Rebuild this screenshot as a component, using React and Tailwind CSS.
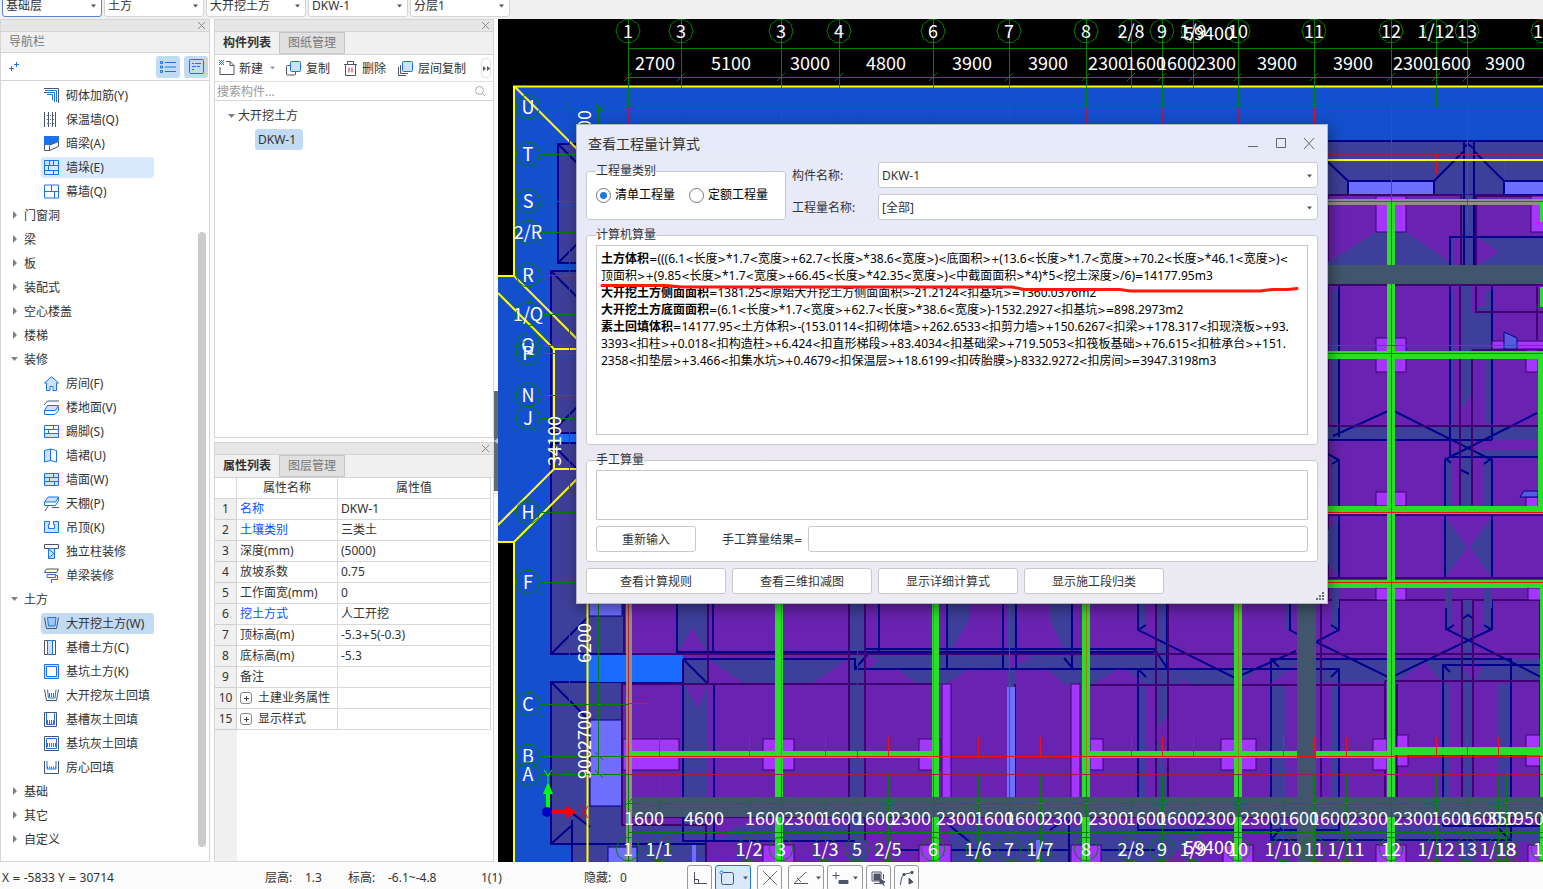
import React, { useState } from 'react';

const BLUE = '#1a73e8';
const DARK = '#4d5468';
const PALE = '#cfe1fa';

const icons = {
  rebar: (
    <g fill="none">
      <path d="M0 .5h14.500V15M0 4.500h10.500V11" stroke={DARK} />
      <path d="M1 2.500h11.500V14M3 6.500h5.500V12M5 4.500h5.500V14" stroke={BLUE} />
    </g>
  ),
  insulation: (
    <g fill="none">
      <path d="M.5 0v15M4.500 0v15M8.500 0v15M11.500 0v15" stroke={DARK} />
      <path d="M0 3.500h12M0 7.500h12M0 11.500h12" stroke={BLUE} strokeDasharray="1 2" />
    </g>
  ),
  hiddenBeam: (
    <g>
      <path d="M0 0h15v5L6 9H0z" fill={BLUE} />
      <path d="M.5 9v5.500h5V9.500M5.500 14.500l9-4V5.500L6 9" fill="none" stroke={DARK} />
    </g>
  ),
  pier: (
    <g fill="none" stroke={BLUE}>
      <path d="M1 1h9v4H1z" fill={PALE} stroke="none" />
      <path d="M.5 .5h14v14H.500zM.5 5.500h14M.5 10.500h14M5.500.5v5M9.500.5v5M4.500 5.500v5M9.500 10.500v4" />
    </g>
  ),
  curtain: (
    <path d="M.5 1h14v13H.500zM.5 7.500h14M7.500 1v6.500M10.500 7.500V14" fill="none" stroke={BLUE} />
  ),
  room: (
    <path
      d="M2.500 7v7.500h3.500v-4h3v4h3.500V7H14.500L7.500.7.500 7z"
      fill={PALE}
      stroke={BLUE}
    />
  ),
  floor: (
    <g>
      <path d="M3.500 5.500h11l-3 5H.500z" fill={PALE} stroke={BLUE} />
      <path d="M.5 10.500v4h10.500l3.500-4v-4" fill="none" stroke={BLUE} />
      <path d="M0 5l3.500-4H15" fill="none" stroke={DARK} />
    </g>
  ),
  skirting: (
    <g stroke={BLUE}>
      <path d="M.5 1.500h14v12H.500z" fill="#fff" />
      <path d="M.5 9.500h14v4H.500z" fill={PALE} />
      <path d="M.5 5.500h14M9.500 1.500v4M4.500 5.500v4" />
    </g>
  ),
  dado: (
    <g stroke={BLUE}>
      <path d="M.5 2.500L6.500 1v11.500L.500 14z" fill={PALE} />
      <path d="M6.500 1l6 1.500V14l-6-1.500z" fill="#fff" />
    </g>
  ),
  wallFace: (
    <g stroke={BLUE} fill={PALE}>
      <path d="M.5 1.500h14v12H.500z" />
      <path d="M.5 5.500h14M.5 9.500h14M9.500 1.500v4M5.500 5.500v4M10.500 9.500v4" />
    </g>
  ),
  ceiling: (
    <g fill="none">
      <path d="M4 1h10.500l-3 5H.500z" fill={PALE} stroke={BLUE} />
      <path d="M.5 6v3.500h11l3-5V1" stroke={BLUE} />
      <path d="M4.500 9.500L1 15M8 11.500h7" stroke={DARK} />
    </g>
  ),
  suspended: (
    <path
      d="M.5 1.500h5v3h-1v4h6v-4h-1v-3h5v11H.500z"
      fill={PALE}
      stroke={BLUE}
    />
  ),
  column: (
    <g fill="none">
      <path d="M.5.5h14v4H.500z" stroke={DARK} />
      <path d="M4.500 4.500h6v10h-6zM5 5.500l5 4-5 4" fill={PALE} stroke={BLUE} />
    </g>
  ),
  beamFinish: (
    <g fill="none">
      <path d="M2.500 1h12l-2 3.500H.500z" stroke={DARK} />
      <path d="M3 6.500h8.500v3H3zM11.500 7.500h2v4h-6V15" stroke={BLUE} />
    </g>
  ),
  pit: (
    <g fill="none">
      <path d="M3.500 1.500h8.500l-1 8.500H4.500z" fill="#9fc8f7" stroke={BLUE} />
      <path d="M.5 1.500l2 11h10l2-11" stroke={DARK} />
    </g>
  ),
  trench: (
    <g>
      <path d="M.5.5h11v14H.500z" fill="#fff" stroke={DARK} />
      <path d="M3.500.5h5v14h-5z" fill={PALE} stroke={BLUE} />
    </g>
  ),
  hole: (
    <g stroke={BLUE}>
      <path d="M.5.5h14v14H.500z" fill={PALE} />
      <path d="M2.500 2.500h10v10h-10z" fill="#fff" />
    </g>
  ),
  pitFill: (
    <g fill="none">
      <path d="M3.500 1.500l1 8.500h6.500l1-8.500" stroke={BLUE} />
      <path d="M5 6h6M5 8h6" stroke={BLUE} strokeDasharray="1 1" strokeWidth="2" />
      <path d="M.5 1.500l2 11h10l2-11" stroke={DARK} />
    </g>
  ),
  trenchFill: (
    <g fill="none">
      <path d="M.5.5h12v14H.500z" stroke={DARK} />
      <path d="M2.500.5v12h8V.5" stroke={BLUE} />
      <path d="M3 11h7M3 9h7" stroke={BLUE} strokeDasharray="1 1" strokeWidth="2" />
    </g>
  ),
  holeFill: (
    <g fill="none">
      <path d="M.5.5h14v14H.500z" stroke={DARK} />
      <path d="M2.500 2.500h10v10h-10z" stroke={BLUE} />
      <path d="M3 10h9M3 8h9" stroke={BLUE} strokeDasharray="1 1" strokeWidth="2" />
    </g>
  ),
  roomFill: (
    <g fill="none">
      <path d="M.5 1v12.500h14V1" stroke={DARK} />
      <path d="M3 1v8h9V1" stroke={BLUE} />
      <path d="M3 7.500h9" stroke={BLUE} strokeDasharray="1 1" strokeWidth="2" />
    </g>
  ),
};

const navItems = [
  { icon: 'rebar', label: '砌体加筋(Y)' },
  { icon: 'insulation', label: '保温墙(Q)' },
  { icon: 'hiddenBeam', label: '暗梁(A)' },
  { icon: 'pier', label: '墙垛(E)', hover: true },
  { icon: 'curtain', label: '幕墙(Q)' },
  { group: true, label: '门窗洞' },
  { group: true, label: '梁' },
  { group: true, label: '板' },
  { group: true, label: '装配式' },
  { group: true, label: '空心楼盖' },
  { group: true, label: '楼梯' },
  { group: true, open: true, label: '装修' },
  { icon: 'room', label: '房间(F)' },
  { icon: 'floor', label: '楼地面(V)' },
  { icon: 'skirting', label: '踢脚(S)' },
  { icon: 'dado', label: '墙裙(U)' },
  { icon: 'wallFace', label: '墙面(W)' },
  { icon: 'ceiling', label: '天棚(P)' },
  { icon: 'suspended', label: '吊顶(K)' },
  { icon: 'column', label: '独立柱装修' },
  { icon: 'beamFinish', label: '单梁装修' },
  { group: true, open: true, label: '土方' },
  { icon: 'pit', label: '大开挖土方(W)', active: true },
  { icon: 'trench', label: '基槽土方(C)' },
  { icon: 'hole', label: '基坑土方(K)' },
  { icon: 'pitFill', label: '大开挖灰土回填' },
  { icon: 'trenchFill', label: '基槽灰土回填' },
  { icon: 'holeFill', label: '基坑灰土回填' },
  { icon: 'roomFill', label: '房心回填' },
  { group: true, label: '基础' },
  { group: true, label: '其它' },
  { group: true, label: '自定义' },
];

const properties = [
  { no: 1, name: '名称', value: 'DKW-1', link: true },
  { no: 2, name: '土壤类别', value: '三类土', link: true },
  { no: 3, name: '深度(mm)', value: '(5000)' },
  { no: 4, name: '放坡系数', value: '0.75' },
  { no: 5, name: '工作面宽(mm)', value: '0' },
  { no: 6, name: '挖土方式', value: '人工开挖', link: true },
  { no: 7, name: '顶标高(m)', value: '-5.3+5(-0.3)' },
  { no: 8, name: '底标高(m)', value: '-5.3' },
  { no: 9, name: '备注', value: '' },
  { no: 10, name: '土建业务属性', value: '', expand: true },
  { no: 15, name: '显示样式', value: '', expand: true },
];

// Operators are set in a wider face than the digits around them
const Formula = ({ text }) =>
  text.split(/([<>=+]+)/).map((part, i) =>
    i % 2 ? (
      <span key={i} className="font-['DejaVu_Sans',sans-serif] text-[10px] leading-none">{part}</span>
    ) : (
      part
    )
  );

const Caret = ({ className }) => (
  <svg className={className} width="5" height="4" viewBox="0 0 5 4">
    <path d="M0 .5h5L2.500 3.500z" fill="#4d5468" />
  </svg>
);

const CloseMark = () => (
  <svg width="9" height="9" viewBox="0 0 9 9">
    <path d="M1 1l7 7M8 1L1 8" stroke="#8c8c8c" />
  </svg>
);

const PanelStrip = () => (
  <div className="flex h-3 shrink-0 items-center justify-end border-b border-[#d5d5d5] bg-[#e6e6e6] pr-[3px]">
    <button type="button" aria-label="关闭">
      <CloseMark />
    </button>
  </div>
);

const Tabs = ({ active, other }) => (
  <div className="flex h-[23px] shrink-0 border-b border-[#d5d5d5] bg-[#f0f0f0]">
    <button type="button" className="w-[65px] border-r border-[#c3c5ca] bg-[#f0f0f0] font-bold">
      {active}
    </button>
    <button type="button" className="w-[65px] border-r border-b border-t border-[#c3c5ca] bg-[#e0e0e0] text-[#777]">
      {other}
    </button>
  </div>
);

const TopBar = () => {
  const combos = ['基础层', '土方', '大开挖土方', 'DKW-1', '分层1'];
  return (
    <header className="flex h-[19px] shrink-0 items-end gap-[2px] overflow-hidden bg-[#f0f0f0] pb-[2px] pl-[2px]">
      {combos.map((name, i) => (
        <div key={name} className="relative w-[100px]">
          <select
            aria-label={name}
            className={`h-6 w-full appearance-none rounded-[3px] border bg-white px-[3px] pt-px outline-none ${
              i === 0 ? 'border-[#5b84d7]' : 'border-[#d5d5d5]'
            }`}
          >
            <option>{name}</option>
          </select>
          <Caret className="pointer-events-none absolute right-[6px] top-[11px]" />
        </div>
      ))}
    </header>
  );
};

const NavRow = ({ item }) => {
  if (item.group) {
    return (
      <button type="button" className="flex h-6 w-full items-center pl-[9px]">
        <svg width="8" height="8" viewBox="0 0 8 8" className="mr-[6px]">
          <path d={item.open ? 'M1 2h7L4.500 6z' : 'M3 0v8l4-4z'} fill="#808080" />
        </svg>
        <span className="pt-[2px]">{item.label}</span>
      </button>
    );
  }

  return (
    <div className="flex h-6 items-center pl-10">
      <button
        type="button"
        className={`flex h-[21px] items-center gap-[7px] rounded-[3px] pl-[3px] ${
          item.active ? 'w-[113px] bg-[#c3daf3]' : ''
        } ${item.hover ? 'w-[113px] bg-[#d9eaff]' : ''}`}
      >
        <svg width="15" height="15" viewBox="0 0 15 15" className="shrink-0">
          {icons[item.icon]}
        </svg>
        <span className="pt-[2px]">{item.label}</span>
      </button>
    </div>
  );
};

const NavPanel = () => (
  <nav className="flex w-[210px] shrink-0 flex-col border border-[#d5d5d5] bg-white">
    <PanelStrip />
    <h2 className="flex h-[21px] shrink-0 items-center border-b border-[#d5d5d5] bg-[#f0f0f0] pl-2 text-[#777]">
      导航栏
    </h2>
    <div className="flex h-7 shrink-0 items-center border-b border-[#d5d5d5] pl-2">
      <button type="button" aria-label="添加" className="mr-auto">
        <svg width="10" height="11" viewBox="0 0 10 11">
          <path d="M2.500 5v5M0 7.500h5M7.500 1v5M5 3.500h5" stroke={BLUE} />
        </svg>
      </button>
      <button type="button" aria-label="列表" className="mr-1 flex h-[22px] w-6 items-center justify-center rounded-[3px] bg-[#c3daf3]">
        <svg width="16" height="14" viewBox="0 0 16 14" fill="none" stroke={BLUE}>
          <path d="M5 2.500h11M5 7h11M5 11.500h11" />
          <path d="M.5 1.500h2v2h-2zM.5 6h2v2h-2zM.5 10.500h2v2h-2z" />
        </svg>
      </button>
      <button type="button" aria-label="详情" className="mr-px flex h-[22px] w-6 items-center justify-center rounded-[3px] bg-[#c3daf3]">
        <svg width="15" height="15" viewBox="0 0 15 15" fill="none" stroke={BLUE}>
          <rect x=".5" y=".5" width="14" height="14" rx="1" />
          <path d="M3 4.500h2M6 4.500h6M3 7.500h4M8 7.500h3M3 10.500h2" />
        </svg>
      </button>
    </div>
    <div className="flex min-h-0 flex-1 overflow-hidden">
      <div className="flex-1 pt-[2px]">
        {navItems.map((item) => (
          <NavRow key={item.label} item={item} />
        ))}
      </div>
      <div className="mb-[14px] mr-[3px] mt-[151px] w-2 shrink-0 rounded-full bg-[#cbcbcb]" />
    </div>
  </nav>
);

const ComponentPanel = () => (
  <section className="flex h-[419px] shrink-0 flex-col border border-[#d5d5d5] bg-white">
    <PanelStrip />
    <Tabs active="构件列表" other="图纸管理" />
    <div className="flex h-[27px] shrink-0 items-center border-b border-[#e0e0e0] pl-1">
      <button type="button" className="flex items-center gap-1">
        <svg width="16" height="16" viewBox="0 0 16 16" fill="none">
          <path d="M7 1.500h4l4 4v9H1V7M11 1.500v4h4" stroke={DARK} />
          <path d="M0 .5h5M0 2.500h5M0 4.500h5" stroke={BLUE} strokeDasharray="1 1" />
          <path d="M1 1.500h4M1 3.500h4" stroke={BLUE} strokeDasharray="1 1" />
        </svg>
        <span className="pt-[2px]">新建</span>
      </button>
      <Caret className="ml-[7px] mr-[11px] opacity-60" />
      <button type="button" className="flex items-center gap-[5px]">
        <svg width="15" height="15" viewBox="0 0 15 15">
          <rect x=".5" y="4.500" width="9" height="9.500" rx="1" fill="#fff" stroke={DARK} />
          <rect x="4.500" y=".5" width="10" height="10" rx="1" fill={PALE} stroke={BLUE} />
        </svg>
        <span className="pt-[2px]">复制</span>
      </button>
      <button type="button" className="ml-[14px] flex items-center gap-[5px]">
        <svg width="13" height="15" viewBox="0 0 13 15" fill="none">
          <path d="M0 3.500h13M3.500 3V.5h6V3M1.500 3.500V14.500h10V3.500" stroke={DARK} />
          <path d="M5 6.500v5M8 6.500v5" stroke="#e02020" />
        </svg>
        <span className="pt-[2px]">删除</span>
      </button>
      <button type="button" className="ml-[12px] flex items-center gap-[5px]">
        <svg width="15" height="15" viewBox="0 0 15 15" fill="none">
          <path d="M.5 6v8.500H8M2.500 4v8.500H10" stroke={DARK} />
          <rect x="4.500" y=".5" width="10" height="10" rx="1" fill={PALE} stroke={BLUE} />
        </svg>
        <span className="pt-[2px]">层间复制</span>
      </button>
      <button type="button" aria-label="更多" className="ml-auto mr-[2px] flex h-5 w-[10px] items-center justify-center rounded border border-[#e0e0e0]">
        <svg width="7" height="5" viewBox="0 0 7 5" className="shrink-0">
          <path d="M0 0v5l3-2.500zM4 0v5l3-2.500z" fill={DARK} />
        </svg>
      </button>
    </div>
    <div className="flex h-[19px] shrink-0 items-center border-b border-[#d5d5d5] pl-[2px] pr-2">
      <input
        aria-label="搜索构件"
        placeholder="搜索构件..."
        className="min-w-0 flex-1 bg-transparent pt-[2px] outline-none placeholder:text-[#999]"
      />
      <svg width="10" height="10" viewBox="0 0 10 10" fill="none" stroke="#aaa">
        <circle cx="4.500" cy="4.500" r="4" />
        <path d="M7 7l3 3" />
      </svg>
    </div>
    <div className="pt-[3px]">
      <button type="button" className="flex h-6 items-center pl-[13px]">
        <svg width="7" height="5" viewBox="0 0 7 5" className="mr-[3px]">
          <path d="M0 0h7L3.500 4z" fill="#808080" />
        </svg>
        大开挖土方
      </button>
      <button type="button" className="ml-10 mt-px flex h-[21px] w-12 items-center rounded-[3px] bg-[#c3daf3] px-[3px]">
        DKW-1
      </button>
    </div>
  </section>
);

const PropertyPanel = () => (
  <section className="mt-1 flex min-h-0 flex-1 flex-col border border-[#d5d5d5] bg-white">
    <PanelStrip />
    <Tabs active="属性列表" other="图层管理" />
    <table className="w-[276px] table-fixed border-separate border-spacing-0 text-left">
      <thead>
        <tr className="h-[21px]">
          <th className="w-[22px] border-b border-r border-[#d8d8d8] p-0" />
          <th className="w-[101px] border-b border-r border-[#d8d8d8] p-0 text-center font-normal">属性名称</th>
          <th className="border-b border-r border-[#d8d8d8] p-0 text-center font-normal">属性值</th>
        </tr>
      </thead>
      <tbody>
        {properties.map((p) => (
          <tr key={p.no} className="h-[21px]">
            <td className="border-b border-r border-[#d0d0d0] bg-[#f0f0f0] p-0 text-center">{p.no}</td>
            <td className={`border-b border-r border-[#d8d8d8] py-0 pl-[3px] pr-0 ${p.link ? 'text-[#0055ff]' : ''}`}>
              {p.expand ? (
                <span className="flex items-center gap-[6px]">
                  <button type="button" aria-label="展开" className="flex h-3 w-3 items-center justify-center rounded-[3px] border border-[#888]">
                    <svg width="5" height="5" viewBox="0 0 5 5" className="shrink-0">
                      <path d="M0 2.500h5M2.500 0v5" stroke="#444" />
                    </svg>
                  </button>
                  {p.name}
                </span>
              ) : (
                p.name
              )}
            </td>
            <td className="border-b border-r border-[#d8d8d8] py-0 pl-[3px] pr-0">
              <Formula text={p.value} />
            </td>
          </tr>
        ))}
      </tbody>
    </table>
    <div className="w-[22px] flex-1 bg-[#f0f0f0]" />
  </section>
);

const topAxes = [
  [628, '1'], [681, '3'], [781, '3'], [839, '4'], [933, '6'], [1009, '7'],
  [1086, '8'], [1131, '2/8'], [1162, '9'], [1193, '1/9'], [1238, '10'],
  [1314, '11'], [1391, '12'], [1436, '1/12'], [1467, '13'], [1543, '14'],
];

const topDims = [
  [655, '2700'], [731, '5100'], [810, '3000'], [886, '4800'], [972, '3900'],
  [1048, '3900'], [1108, '2300'], [1146, '1600'], [1177, '1600'], [1216, '2300'],
  [1277, '3900'], [1353, '3900'], [1413, '2300'], [1451, '1600'], [1505, '3900'],
];

const bottomAxes = [
  [628, '1'], [659, '1/1'], [749, '1/2'], [781, '3'], [825, '1/3'], [857, '5'],
  [888, '2/5'], [933, '6'], [978, '1/6'], [1009, '7'], [1040, '1/7'], [1086, '8'],
  [1131, '2/8'], [1162, '9'], [1193, '1/9'], [1238, '10'], [1283, '1/10'],
  [1314, '11'], [1346, '1/11'], [1391, '12'], [1436, '1/12'], [1467, '13'],
  [1498, '1/13'], [1506, '18'], [1543, '14'],
];

const bottomDims = [
  [644, '1600'], [704, '4600'], [765, '1600'], [804, '2300'], [841, '1600'],
  [875, '1600'], [911, '2300'], [956, '2300'], [994, '1600'], [1025, '1600'],
  [1063, '2300'], [1108, '2300'], [1146, '1600'], [1177, '1600'], [1216, '2300'],
  [1260, '2300'], [1299, '1600'], [1330, '1600'], [1368, '2300'], [1413, '2300'],
  [1451, '1600'], [1482, '1600'], [1502, '350'], [1524, '1950'],
];

const sideAxes = [
  [107, 'U'], [154, 'T'], [201, 'S'], [232, '2/R'], [275, 'R'], [314, '1/Q'],
  [345, 'Q'], [353, 'P'], [395, 'N'], [418, 'J'], [512, 'H'], [582, 'F'],
  [704, 'C'], [756, 'B'], [774, 'A'],
];

const decagon = (cx, cy) =>
  Array.from({ length: 10 }, (_, i) => {
    const a = (i * Math.PI) / 5;
    return `${(cx + 12 * Math.cos(a)).toFixed(1)},${(cy + 12 * Math.sin(a)).toFixed(1)}`;
  }).join(' ');

const Bubble = ({ x, y, label }) => (
  <g>
    <polygon points={decagon(x, y)} fill="none" stroke="#008000" />
    <text x={x} y={y + 7}>{label}</text>
  </g>
);

// Each entry is [x, y, width, height]
const rects = (list) =>
  list.map(([x, y, w, h]) => <rect key={`${x}-${y}-${w}`} x={x} y={y} width={w} height={h} />);

const Drawing = () => (
  <svg className="absolute inset-0 h-full w-full" aria-label="平面图">
    <g transform="translate(-498 -19)">
      {/* excavation outline */}
      <path d="M514 86H2400V1500H514V542H498V276H514z" fill="#1450cd" />

      {/* foundation slopes on the left */}
      <g fill="#3e3f9a" stroke="#00008b" strokeWidth="2">
        <path d="M558 144H640V263H558z" />
        <path d="M551 271H640V433H551z" />
        <path d="M551 443H640V654H551z" />
        <path d="M551 682H714V844H551z" />
        <path d="M572 844H720V900H572z" />
      </g>
      <rect x="588" y="655" width="95" height="27" fill="#1a6bff" />
      <rect x="554" y="434" width="24" height="8" fill="#1a6bff" />
      <g fill="#6e6eff" stroke="#00008b">
        {rects([[589, 600, 33, 16], [590, 720, 32, 86], [608, 847, 29, 20]])}
      </g>
      <path
        d="M558 144l20 20M558 263l20-20M551 271l30 30M551 433l26-26M551 443l26 26M551 654l38-38M551 682l38 38M551 844l20-18M572 813l18 14M572 820v30"
        fill="none"
        stroke="#00008b"
        strokeWidth="2"
      />

      {/* rooms */}
      <path d="M1328 141H1543V200H1328z" fill="#3e3f9a" />
      <g fill="#6a23b0" stroke="#3f0073" strokeWidth="2">
        <path d="M1328 195H2400V900H1328z" />
        <path d="M624 600H1540V654H624z" />
        <path d="M622 684H1540V825H622z" />
        <path d="M706 654H1540V900H706z" />
      </g>
      <path d="M683 654H1328V690H683z" fill="#6a23b0" />

      {/* slopes below the dialog */}
      <g fill="#3e3f9a">
        {rects([
          [677, 600, 32, 52], [683, 684, 25, 140], [849, 600, 16, 262],
          [865, 649, 290, 20], [1156, 600, 12, 262], [1138, 600, 7, 30],
          [1138, 685, 7, 145], [1286, 600, 6, 30], [1332, 600, 7, 30],
          [1332, 685, 7, 145], [1271, 684, 14, 156], [1462, 600, 12, 262],
          [1446, 600, 6, 30], [1484, 600, 8, 30], [1443, 684, 7, 116],
          [1497, 684, 14, 156], [1271, 659, 272, 23], [1007, 600, 9, 262],
          [708, 826, 140, 15], [950, 826, 290, 36], [1271, 826, 272, 16],
        ])}
        <path d="M683 659H848L811 684H745L708 659V710L698 700 683 684z" />
        <path d="M947 600h23v18l-20 34h-3z" />
        <path d="M897 669H968l-22 15h-29zM1048 669H1118l-24 15h-30z" />
        <path d="M1050 600h22v50h-8l-14-30zM1126 669h64l-10 15h-36z" />
        <path d="M1168 669h90l-20 15h-48zM850 684l15 12v50l-15-40z" />
      </g>
      <g fill="#6a23b0">
        <path d="M692 628l15 24h-28zM685 686h22l-9 22zM863 654l16 6-14 12zM1156 730l11-14v60zM1271 684l30-24 10 24zM1393 684l32-22 18 22z" />
        <path d="M1474 684l-12-20 22-2zM720 841l-10-15h26zM865 826h40l-10 16h-30z" />
        <path d="M1160 862l60-40h24v40zM1010 654l22 4-22 10z" />
      </g>
      <g fill="none" stroke="#00008b" strokeWidth="2">
        <path d="M677 600V652H1154M713 600V652M683 659H855V669H1339M683 659V841H855M714 684V841" />
        <path d="M865 649H1155V652M879 600V652M947 600V668M855 669l12-14M1064 658l10 12M1072 600V667M1155 650l12 18M1167 600V668" />
        <path d="M1138 600V630L1235 678 1296 651M1290 600V630l7 4M1339 600V630L1316 642 1390 678 1492 629V600M1446 600V629L1543 678" />
        <path d="M1138 830V669H1339V830zM1271 840V659H1511V840zM1443 826V665H1543M1443 826H1543M683 659l24 24" />
        <path d="M1138 669l8 8M1339 669l-8 8M1271 659l8 8M1443 665l7 7M1146 625l-8 5M1331 625l8 5M1484 625l8 5M1454 625l-8 5M1462 619l6-4 6 4" />
        <path d="M1003 600V668M1016 600V668M950 826l20 16M1050 830l20-14M1069 820V862M897 850H1155M1271 840l10-12M1498 828l12 12" />
      </g>
      <g fill="none" stroke="#3f0073" strokeWidth="2">
        <path d="M708 600V684M849 600V841M865 600V841M624 654H1543M622 684H940M1089 685H1385M1385 681H1543M1156 600V798M1168 600V798" />
        <path d="M1015 684V798M1321 600V798M1462 600V798M1473 600V798M1397 684V800M1385 681V798M632 817H1543" />
      </g>
      <g fill="#6e6eff">{rects([[1007, 687, 8, 111], [1036, 840, 5, 22], [692, 845, 4, 17]])}</g>

      {/* slopes and lines right of the dialog */}
      <g fill="#6e6eff" stroke="#00008b" strokeWidth="2">
        {rects([[1348, 181, 86, 14], [1504, 181, 60, 14]])}
      </g>
      <g fill="#3e3f9a">
        {rects([
          [1461, 195, 15, 70], [1476, 237, 67, 28], [1450, 237, 4, 28],
          [1332, 290, 7, 134], [1450, 290, 4, 150], [1486, 290, 6, 134],
          [1461, 284, 11, 222], [1328, 426, 215, 14], [1454, 450, 89, 7],
          [1445, 458, 6, 48], [1484, 458, 8, 48], [1332, 458, 7, 48],
          [1332, 588, 7, 20], [1445, 588, 7, 20], [1484, 588, 8, 20],
        ])}
        <path d="M1376 232H1406L1450 262V265H1328V262z" />
        <path d="M1461 303l10 13 8-10h12v45h-30z" />
        <path d="M1445 516l22 31-22 31zM1492 516l-22 31 22 31zM1328 530l11-14v62l-11-15z" />
      </g>
      <path d="M1476 237l23 15-23 14zM1461 410l11-16v32h-11z" fill="#6a23b0" />
      <g fill="none" stroke="#00008b" strokeWidth="2">
        <path d="M1328 141H1543M1328 162l20 19M1464 141V265M1474 141V265M1464 151l-30 30M1474 151l30 30M1450 265V237H1543" />
        <path d="M1339 286V437M1450 286V457M1492 286V440M1328 440H1492M1333 436L1388 411M1394 411L1492 460V505M1537 413L1450 457H1543" />
        <path d="M1328 454l11 6V578M1445 578V460l10-6M1492 460V578M1339 460l-7 4M1445 458l6 5M1492 458l-8 6M1461 470l8 4M1463 148l5-4 5 4" />
      </g>
      <g fill="none" stroke="#3f0073" strokeWidth="2">
        <path d="M1328 195H1461V265M1476 265V196H1543M1328 285H1543M1460 285V505M1472 350V505M1476 285V312H1543M1328 426H1543M1328 515H1543M1328 578H1543M1472 350H1543M1537 285V340" />
      </g>

      {/* column heads */}
      <g fill="#a436ff" stroke="#3f0073">
        {rects([
          [623, 739, 56, 31], [763, 739, 31, 31], [919, 739, 21, 31],
          [942, 684, 9, 114], [1071, 684, 9, 114], [1090, 739, 13, 31],
          [1221, 739, 35, 31], [1373, 739, 14, 31], [1397, 735, 11, 31],
          [1526, 735, 14, 31], [1376, 196, 30, 36], [1531, 196, 20, 36],
          [1376, 338, 30, 34], [1376, 492, 30, 14], [1376, 588, 30, 12],
          [1528, 588, 20, 12], [1492, 341, 60, 8], [1526, 350, 12, 22],
          [1526, 497, 12, 10], [763, 845, 31, 20], [919, 845, 32, 20],
          [1071, 845, 30, 20], [1223, 845, 30, 20], [1376, 845, 30, 20],
          [1528, 845, 20, 20],
        ])}
      </g>
      <path d="M1504 332l13 6v11h-13zM1524 491h14v6h-18z" fill="#5a5ae0" stroke="#00008b" />

      {/* walls */}
      <path d="M626 600h6V862h-6zM1328 199H1543v6H1328z" fill="#8f8f88" />
      <g fill="#2bdd2b">
        {rects([
          [775, 600, 8, 198], [932, 600, 7, 198], [1082, 600, 8, 198],
          [1234, 600, 8, 198], [1387, 202, 8, 596], [1540, 202, 8, 20],
          [775, 817, 8, 45], [932, 817, 7, 45], [1082, 817, 8, 45],
          [1234, 817, 8, 45], [1387, 817, 8, 45], [1540, 580, 8, 282],
          [629, 751, 303, 7], [1090, 751, 297, 7], [1395, 747, 148, 8],
          [1328, 351, 215, 8], [1328, 506, 215, 8], [1328, 580, 215, 8],
          [1538, 356, 8, 154], [1540, 287, 8, 20],
        ])}
      </g>
      <path d="M632 797H2400v20H632zM1297 600h19V900h-19zM1328 265H2400v19H1328z" fill="#41566c" />

      {/* red grid */}
      <g stroke="#a01c50" fill="none">
        <path d="M628 107.500H2400M628 774.500H2400M1328 154.500H1543M628.500 107V124M681.500 107V124M839.500 107V124M857.500 107V862M933.500 107V124M1086.500 107V124M1162.500 107V124M1238.500 107V124" />
        <path d="M1391.500 107V798M628.500 600V774M1009.500 600V774" stroke="#c22030" />
      </g>
      <path
        d="M781.500 107V124M1009.500 107V124M1314.500 107V124M1467.500 107V226M1436.500 154V174M1505.500 154V174M1328 201.500H1543M1328 345.500H1543M1328 353.500H1543M1328 512.500H1543M1328 582.500H1543M628 756.500H2400M628 703.500H648M659.500 737V756M749.500 737V756M825.500 737V756M888.500 737V756M978.500 737V756M1040.500 737V756M1131.500 737V756M1162.500 737V756M1193.500 737V756M1283.500 737V756M1314.500 737V756M1346.500 737V756M1436.500 737V756M1467.500 737V756M1498.500 737V756"
        fill="none"
        stroke="#f01010"
      />
      <path d="M781.500 600V774M933.500 600V774M1086.500 600V774M1238.500 600V774" stroke="#a07a10" fill="none" />

      {/* yellow slope lines */}
      <path
        d="M2400 86.500H514V276H498M514 86L600 172M514 276L600 362M498 293L554 349H600M554 349V469M600 469H554L498 525M600 456L514 542H498M514 542V900M587.500 600V900M1328 160H2400"
        fill="none"
        stroke="#ffff00"
        strokeWidth="2"
      />

      {/* axes */}
      <g stroke="#008000" fill="none">
        <path d="M628 48.500H2400M628 77.500H2400M569.500 107V775M598.500 107V775M628 803.500H2400M628 832.500H2400" />
        {topAxes.map(([x]) => (
          <path key={x} d={`M${x + 0.5} 19V107M${x - 4} 81l8-8`} />
        ))}
        {bottomAxes.map(([x]) => (
          <path key={x} d={`M${x + 0.5} 775V862M${x - 4} 807l8-8`} />
        ))}
        {sideAxes.map(([y]) => (
          <path key={y} d={`M540 ${y + 0.5}H628`} />
        ))}
        <path d="M566 103l8 8M595 103l8 8M595 700l8 8M595 752l8 8M595 770l8 8M566 770l8 8" />
      </g>
      <g fill="#fff" fontSize="18" textAnchor="middle" fontFamily='"Noto Sans CJK SC", sans-serif'>
        {topAxes.map(([x, label]) => (
          <Bubble key={x} x={x} y={31} label={label} />
        ))}
        {bottomAxes.map(([x, label]) => (
          <Bubble key={x} x={x} y={849} label={label} />
        ))}
        {sideAxes.map(([y, label]) => (
          <Bubble key={y} x={528} y={y} label={label} />
        ))}
        {topDims.map(([x, label]) => (
          <text key={x} x={x} y="70">{label}</text>
        ))}
        {bottomDims.map(([x, label]) => (
          <text key={x} x={x} y="825">{label}</text>
        ))}
        <text x="1209" y="40">59400</text>
        <text x="1209" y="854">59400</text>
        <text transform="translate(561 441) rotate(-90)">34100</text>
        <text transform="translate(591 643) rotate(-90)">6200</text>
        <text transform="translate(591 730) rotate(-90)">2700</text>
        <text transform="translate(591 764) rotate(-90)">900</text>
        <text transform="translate(591 130) rotate(-90)">4700</text>
      </g>

      {/* origin marker */}
      <path d="M548 812V790" stroke="#00ff00" strokeWidth="4" />
      <path d="M543 794l5-12 5 12z" fill="#00ff00" />
      <path d="M548 812h20" stroke="#f00" strokeWidth="4" />
      <path d="M566 806l11 6-11 6z" fill="#f00" />
      <circle cx="547" cy="812" r="5" fill="#0000c8" />
      <path d="M544 770l4 6 4-6M548 776v6" stroke="#00ff00" fill="none" />
      <path d="M580 806l8 12M588 806l-8 12" stroke="#f00" />
    </g>
  </svg>
);

const boxBorder = 'border border-[#c8c8c8]';

const results = [
  {
    title: '土方体积',
    lines: [
      '=(((6.1<长度>*1.7<宽度>+62.7<长度>*38.6<宽度>)<底面积>+(13.6<长度>*1.7<宽度>+70.2<长度>*46.1<宽度>)<',
      '顶面积>+(9.85<长度>*1.7<宽度>+66.45<长度>*42.35<宽度>)<中截面面积>*4)*5<挖土深度>/6)=14177.95m3',
    ],
  },
  {
    title: '大开挖土方侧面面积',
    lines: ['=1381.25<原始大开挖土方侧面面积>-21.2124<扣基坑>=1360.0376m2'],
  },
  {
    title: '大开挖土方底面面积',
    lines: ['=(6.1<长度>*1.7<宽度>+62.7<长度>*38.6<宽度>)-1532.2927<扣基坑>=898.2973m2'],
  },
  {
    title: '素土回填体积',
    lines: [
      '=14177.95<土方体积>-(153.0114<扣砌体墙>+262.6533<扣剪力墙>+150.6267<扣梁>+178.317<扣现浇板>+93.',
      '3393<扣柱>+0.018<扣构造柱>+6.424<扣直形梯段>+83.4034<扣基础梁>+719.5053<扣筏板基础>+76.615<扣桩承台>+151.',
      '2358<扣垫层>+3.466<扣集水坑>+0.4679<扣保温层>+18.6199<扣砖胎膜>)-8332.9272<扣房间>=3947.3198m3',
    ],
  },
];

const SelectBox = ({ id, value }) => (
  <div className="relative">
    <select
      id={id}
      className={`h-[26px] w-full appearance-none rounded-[3px] bg-white px-[3px] pt-px outline-none ${boxBorder}`}
    >
      <option>{value}</option>
    </select>
    <Caret className="pointer-events-none absolute right-[6px] top-[12px]" />
  </div>
);

const QuantityDialog = () => {
  const [kind, setKind] = useState('list');
  const [formula, setFormula] = useState('');
  const [result, setResult] = useState('');

  const kinds = [
    { id: 'list', label: '清单工程量' },
    { id: 'quota', label: '定额工程量' },
  ];

  return (
    <div
      role="dialog"
      aria-label="查看工程量计算式"
      className="absolute left-[78px] top-[105px] w-[752px] border border-[#b4b4bc] bg-gradient-to-b from-[#e6ebf9] via-[#ece7f4] to-[#ebebf2] px-[9px] pb-[9px] shadow-[2px_4px_14px_rgba(0,0,0,0.45)]"
    >
      <div className="-mr-[5px] flex h-[37px] items-center pl-[2px]">
        <h1 className="mr-auto text-[14px]">查看工程量计算式</h1>
        <button type="button" aria-label="最小化" className="flex w-7 justify-center">
          <svg width="12" height="12" viewBox="0 0 12 12">
            <path d="M1 8.500h10" stroke="#666" />
          </svg>
        </button>
        <button type="button" aria-label="最大化" className="flex w-7 justify-center">
          <svg width="12" height="12" viewBox="0 0 12 12">
            <path d="M1.500 .5h9v9h-9z" stroke="#666" fill="none" />
          </svg>
        </button>
        <button type="button" aria-label="关闭" className="flex w-7 justify-center">
          <svg width="12" height="12" viewBox="0 0 12 12">
            <path d="M1 0l10 11M11 0L1 11" stroke="#666" />
          </svg>
        </button>
      </div>

      <div className="flex items-end">
        <fieldset className={`h-[57px] w-[200px] rounded-[3px] bg-white px-[9px] ${boxBorder}`}>
          <legend className="h-4 leading-4">工程量类别</legend>
          <div className="flex gap-[14px] pt-2">
            {kinds.map((k) => (
              <label key={k.id} className="flex items-center gap-1 text-black">
                <input
                  type="radio"
                  name="kind"
                  checked={kind === k.id}
                  onChange={() => setKind(k.id)}
                  className="h-[15px] w-[15px] appearance-none rounded-full border border-[#777] bg-white checked:bg-[radial-gradient(circle,#1a73e8_3px,white_4px)]"
                />
                {k.label}
              </label>
            ))}
          </div>
        </fieldset>
        <div className="ml-[6px] grid flex-1 grid-cols-[86px_1fr] items-center gap-y-[6px]">
          <label htmlFor="component-name" className="pt-[2px]">构件名称:</label>
          <SelectBox id="component-name" value="DKW-1" />
          <label htmlFor="quantity-name" className="pt-[2px]">工程量名称:</label>
          <SelectBox id="quantity-name" value="[全部]" />
        </div>
      </div>

      <fieldset className={`mt-[7px] rounded-[3px] bg-white px-[9px] pb-[9px] pt-[2px] ${boxBorder}`}>
        <legend className="h-4 leading-4">计算机算量</legend>
        <div className={`relative h-[190px] whitespace-nowrap bg-white px-1 py-1 leading-[17px] text-black ${boxBorder}`}>
          {results.map((r) => (
            <p key={r.title}>
              <b>{r.title}</b>
              {r.lines.map((line, i) => (
                <React.Fragment key={line}>
                  {i > 0 && <br />}
                  <Formula text={line} />
                </React.Fragment>
              ))}
            </p>
          ))}
          <svg className="absolute left-[3px] top-[35px]" width="702" height="12" viewBox="0 0 702 12">
            <path
              d="M2 4.500H66L82 6H412L424 8.500H520L530 10H660L672 8.500H688L697 7.500"
              fill="none"
              stroke="#ff1a0a"
              strokeWidth="3"
              strokeLinecap="round"
            />
          </svg>
        </div>
      </fieldset>

      <fieldset className={`mt-[7px] rounded-[3px] bg-white px-[9px] pb-[9px] pt-[2px] ${boxBorder}`}>
        <legend className="h-4 leading-4">手工算量</legend>
        <textarea
          aria-label="手工算量"
          value={formula}
          onChange={(e) => setFormula(e.target.value)}
          className={`block h-[50px] w-full resize-none bg-white px-1 outline-none ${boxBorder}`}
        />
        <div className="mt-[6px] flex items-center">
          <button
            type="button"
            onClick={() => setFormula('')}
            className={`h-[26px] w-[100px] rounded-[3px] bg-white pt-px ${boxBorder}`}
          >
            重新输入
          </button>
          <label htmlFor="manual-result" className="ml-[26px] w-[86px] pt-[2px]">
            <Formula text="手工算量结果=" />
          </label>
          <input
            id="manual-result"
            value={result}
            onChange={(e) => setResult(e.target.value)}
            className={`h-[26px] min-w-0 flex-1 rounded-[3px] bg-white px-1 outline-none ${boxBorder}`}
          />
        </div>
      </fieldset>

      <div className="mt-[6px] flex gap-[6px]">
        {['查看计算规则', '查看三维扣减图', '显示详细计算式', '显示施工段归类'].map((label) => (
          <button key={label} type="button" className={`h-[26px] w-[140px] rounded-[3px] bg-white pt-px ${boxBorder}`}>
            {label}
          </button>
        ))}
      </div>
      <svg className="absolute bottom-[3px] right-[3px]" width="8" height="8" viewBox="0 0 8 8">
        <path d="M6 0h2v2H6zM3 3h2v2H3zM6 3h2v2H6zM0 6h2v2H0zM3 6h2v2H3zM6 6h2v2H6z" fill="#70707a" />
      </svg>
    </div>
  );
};

const toolButton = 'flex h-[26px] items-center justify-center rounded-[3px] border';

const StatusBar = () => (
  <footer className="flex h-[27px] shrink-0 items-start overflow-hidden whitespace-nowrap bg-[#fcfcfc] pl-[2px] pt-[3px]">
    <div className="flex h-[26px] items-center">
      <span className="w-[263px]">
        <Formula text="X = -5833 Y = 30714" />
      </span>
      <span className="w-[40px]">层高:</span>
      <span className="w-[43px]">1.3</span>
      <span className="w-[40px]">标高:</span>
      <span className="w-[93px]">-6.1~-4.8</span>
      <span className="w-[103px]">1(1)</span>
      <span className="w-[36px]">隐藏:</span>
      <span className="w-[67px]">0</span>
    </div>
    <button type="button" aria-label="正交" className={`${toolButton} w-[25px] border-[#999]`}>
      <svg width="14" height="14" viewBox="0 0 14 14" fill="none" stroke={DARK}>
        <path d="M1.500 1v11.500H14M1.500 8.500h4v4" />
      </svg>
    </button>
    <button type="button" aria-label="捕捉" className={`${toolButton} ml-[3px] w-9 gap-2 border-[#1a73e8] bg-[#d9e8fb]`}>
      <svg width="16" height="16" viewBox="0 0 16 16" fill="none" stroke={DARK}>
        <rect x="2.500" y="2.500" width="12" height="12" rx="2" />
        <circle cx="2.500" cy="2.500" r="1.500" fill="#fff" stroke={BLUE} />
      </svg>
      <Caret />
    </button>
    <button type="button" aria-label="交点" className={`${toolButton} ml-[6px] w-[25px] border-[#999]`}>
      <svg width="16" height="16" viewBox="0 0 16 16" stroke="#777">
        <path d="M1 1l14 14M15 1L1 15" />
      </svg>
    </button>
    <button type="button" aria-label="角度" className={`${toolButton} ml-[6px] w-9 gap-2 border-[#999]`}>
      <svg width="16" height="14" viewBox="0 0 16 14" fill="none" stroke={DARK}>
        <path d="M14 1L2 12.500h14M5 7l4 4" />
      </svg>
      <Caret />
    </button>
    <button type="button" aria-label="输入" className={`${toolButton} ml-[3px] w-9 gap-1 border-[#999]`}>
      <svg width="17" height="14" viewBox="0 0 17 14" fill="none" stroke={DARK}>
        <path d="M4 1v7M.5 4.500h7" />
        <path d="M7 9.500h9v3H7z" fill={DARK} />
      </svg>
      <Caret />
    </button>
    <button type="button" aria-label="选择" className={`${toolButton} ml-[3px] w-[25px] border-[#999]`}>
      <svg width="15" height="15" viewBox="0 0 15 15" fill="none" stroke={DARK}>
        <path d="M1 1h9v9H1z" />
        <path d="M3 3h6v6H3z" fill={DARK} />
        <path d="M12.500 3v5M3 12.500h6" />
        <path d="M9 8l5 3-2 .5 1 3-2-2.500-2 1z" fill={DARK} />
      </svg>
    </button>
    <button type="button" aria-label="折线" className={`${toolButton} ml-[3px] w-[25px] border-[#999]`}>
      <svg width="15" height="15" viewBox="0 0 15 15" fill="none" stroke={DARK}>
        <path d="M1.500 14C2 8 3 5 5 3.500L13 1.500" />
        <path d="M4 2.500h2v2H4zM12 .5h2v2h-2z" fill={DARK} />
        <path d="M10 7l4 4-4 2z" fill={DARK} />
      </svg>
    </button>
  </footer>
);

const App = () => (
  <div className="flex h-screen flex-col overflow-hidden bg-[#fcfcfc] font-['Noto_Sans','Noto_Sans_CJK_SC',sans-serif] text-[12px] leading-4 text-[#333]">
    <TopBar />
    <main className="flex min-h-0 flex-1">
      <NavPanel />
      <div className="ml-1 flex w-[280px] shrink-0 flex-col">
        <ComponentPanel />
        <PropertyPanel />
      </div>
      <div className="flex w-1 shrink-0 flex-col pt-[372px]">
        <div className="flex h-[100px] items-center bg-[#5f6a72]">
          <svg width="4" height="6" viewBox="0 0 4 6">
            <path d="M4 0v6L0 3z" fill="#c0c4c8" />
          </svg>
        </div>
      </div>
      <div className="relative min-w-0 flex-1 overflow-hidden bg-black">
        <Drawing />
        <QuantityDialog />
      </div>
    </main>
    <StatusBar />
  </div>
);

export default App;
